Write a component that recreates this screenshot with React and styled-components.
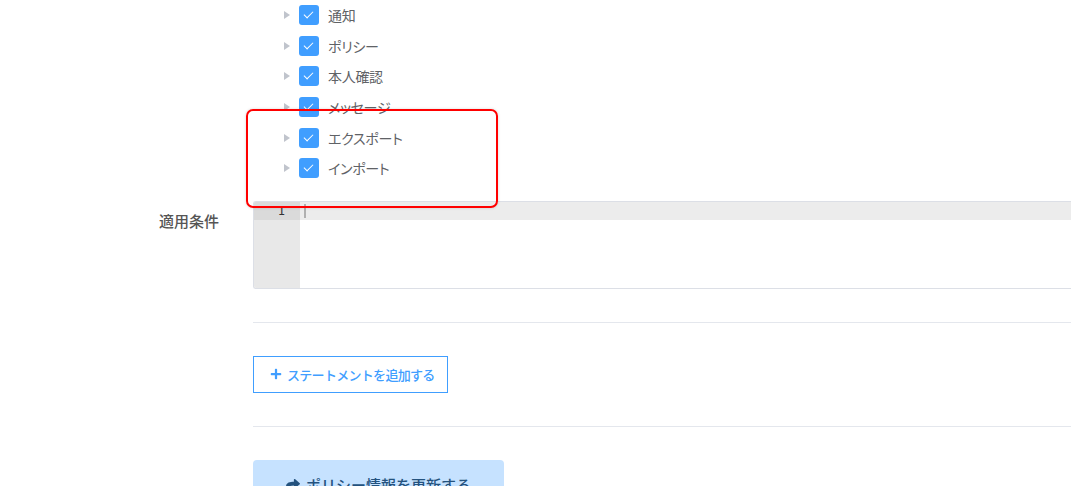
import React from "react";
import styled, { createGlobalStyle } from "styled-components";
import { FaPlus, FaShare } from "react-icons/fa";

const GlobalStyle = createGlobalStyle`
  body {
    margin: 0;
    background: #fff;
    font-family: "Noto Sans CJK JP", "Noto Sans", "Liberation Sans", sans-serif;
    font-feature-settings: "palt";
    color: #606266;
  }
`;

const Page = styled.div`
  position: relative;
  width: 1071px;
  height: 486px;
  overflow: hidden;
`;

const FormRow = styled.div`
  display: grid;
  grid-template-columns: 253px 1fr;
  margin-top: ${({ $top }) => $top || 0}px;
`;

const Label = styled.div`
  text-align: right;
  padding-right: 34px;
  padding-top: ${({ $pad }) => $pad || 0}px;
  font-size: 15px;
  font-weight: 500;
  color: #555;
  line-height: 20px;
`;

const Tree = styled.ul`
  list-style: none;
  margin: 0;
  padding: 0 0 0 30px;
`;

const Node = styled.li`
  display: flex;
  align-items: center;
  height: 30.6px;
`;

const Caret = styled.span`
  width: 0;
  height: 0;
  border-top: 4px solid transparent;
  border-bottom: 4px solid transparent;
  border-left: 6px solid #c0c4cc;
  margin-left: 1px;
  margin-right: 9px;
`;

const Check = styled.span`
  position: relative;
  width: 20px;
  height: 20px;
  border-radius: 3px;
  background: #409eff;
  margin-right: 9px;
  flex-shrink: 0;

  &::after {
    content: "";
    position: absolute;
    left: 7px;
    top: 4px;
    width: 4px;
    height: 8px;
    border: 1.5px solid #fff;
    border-left: 0;
    border-top: 0;
    transform: rotate(45deg);
  }
`;

const NodeText = styled.span`
  font-size: 14px;
  letter-spacing: -0.3px;
  color: #606266;
`;

const Editor = styled.div`
  display: flex;
  height: 86px;
  border: 1px solid #dcdfe6;
  border-right: 0;
  border-radius: 3px 0 0 3px;
  overflow: hidden;
`;

const Gutter = styled.div`
  width: 46px;
  background: #e8e8e8;
`;

const LineNo = styled.div`
  height: 18px;
  background: #dadada;
  text-align: right;
  padding-right: 15px;
  font-family: "DejaVu Sans Mono", "Liberation Mono", monospace;
  font-size: 12px;
  line-height: 18px;
  color: #333;
`;

const Code = styled.div`
  flex: 1;
  background: #fff;
`;

const ActiveLine = styled.div`
  height: 18px;
  background: #ececec;
  display: flex;
  align-items: center;
  padding-left: 4px;
`;

const Cursor = styled.span`
  width: 2px;
  height: 14px;
  background: #b0b0b0;
`;

const Divider = styled.div`
  height: 1px;
  background: #e4e7ed;
  margin: 33px 0;
`;

const OutlineButton = styled.button`
  display: inline-flex;
  align-items: center;
  gap: 5px;
  height: 37px;
  padding: 0 12px 0 16px;
  border: 1px solid #409eff;
  border-radius: 0;
  background: #fff;
  color: #409eff;
  font-family: inherit;
  font-size: 13px;
  letter-spacing: -0.7px;
  font-weight: 500;
  cursor: pointer;
`;

const ButtonRow = styled.div`
  display: flex;
`;

const SubmitButton = styled.button`
  display: inline-flex;
  align-items: center;
  justify-content: center;
  gap: 6px;
  width: 251px;
  height: 50px;
  border: 0;
  border-radius: 4px;
  background: #c6e2ff;
  color: #24527e;
  font-family: inherit;
  font-size: 15px;
  font-weight: 500;
  cursor: not-allowed;
`;

const Highlight = styled.div`
  position: absolute;
  left: 246px;
  top: 109px;
  width: 248px;
  height: 95px;
  border: 2px solid #ff0000;
  border-radius: 7px;
  box-shadow: 0 0 3px rgba(0, 0, 0, 0.15);
  pointer-events: none;
`;

const nodes = ["通知", "ポリシー", "本人確認", "メッセージ", "エクスポート", "インポート"];

export default function App() {
  return (
    <>
      <GlobalStyle />
      <Page>
        <FormRow>
          <div />
          <Tree>
            {nodes.map((n) => (
              <Node key={n}>
                <Caret />
                <Check />
                <NodeText>{n}</NodeText>
              </Node>
            ))}
          </Tree>
        </FormRow>

        <FormRow $top={17}>
          <Label $pad={10}>適用条件</Label>
          <Editor>
            <Gutter>
              <LineNo>1</LineNo>
            </Gutter>
            <Code>
              <ActiveLine>
                <Cursor />
              </ActiveLine>
            </Code>
          </Editor>
        </FormRow>

        <FormRow>
          <div />
          <div>
            <Divider />
            <ButtonRow>
              <OutlineButton>
                <FaPlus size={12} />
                ステートメントを追加する
              </OutlineButton>
            </ButtonRow>
            <Divider />
            <ButtonRow>
              <SubmitButton disabled>
                <FaShare size={14} />
                ポリシー情報を更新する
              </SubmitButton>
            </ButtonRow>
          </div>
        </FormRow>

        <Highlight />
      </Page>
    </>
  );
}
